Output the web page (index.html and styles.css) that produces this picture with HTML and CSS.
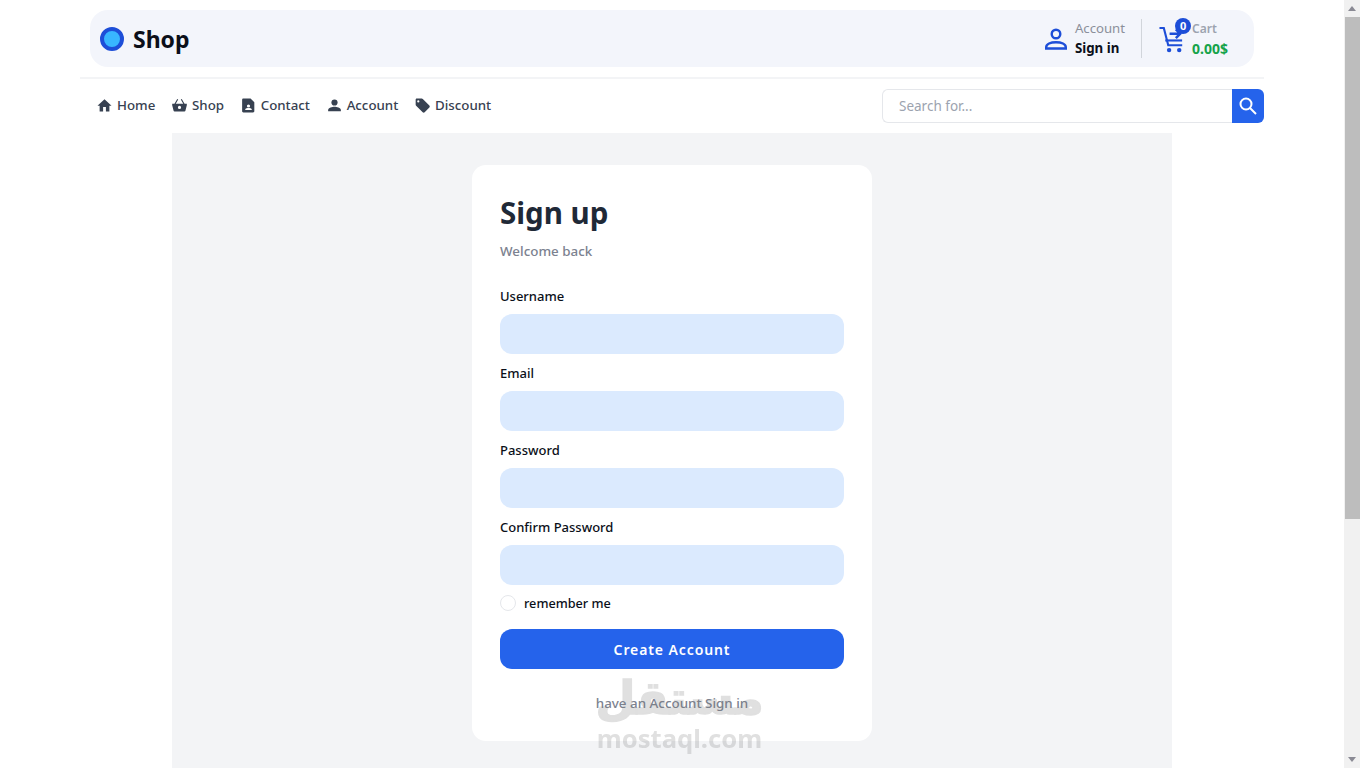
FILE: index.html
```html
<!DOCTYPE html>
<html lang="en">
<head>
  <meta charset="UTF-8">
  <meta name="viewport" content="width=device-width, initial-scale=1.0">
  <title>Sign up</title>
  <link rel="stylesheet" href="styles.css">
</head>
<body>
  <header class="site-header">
    <div class="topbar">
      <a class="logo" href="#">
        <span class="logo-dot"></span>
        <span class="logo-text">Shop</span>
      </a>
      <div class="topbar-right">
        <a class="account" href="#">
          <svg class="account-icon" viewBox="0 0 22 22" fill="none" stroke="#1d4ed8" stroke-width="2.4">
            <circle cx="11" cy="6" r="4.3"/>
            <path d="M1.2 20.5v-1.2c0-3.2 4.400-5 9.800-5s9.800 1.800 9.800 5v1.200z"/>
          </svg>
          <span class="stack">
            <span class="account-label">Account</span>
            <span class="account-action">Sign in</span>
          </span>
        </a>
        <a class="cart" href="#">
          <svg class="cart-icon" viewBox="0 0 27 27" fill="none" stroke="#1d4ed8" stroke-width="2.2">
            <path d="M0.5 1.500h4.500l4.600 18h14.500"/>
            <path d="M6.500 14.500h17.500"/>
            <path d="M11 7.500h11M17.500 3l4.500 4.500-4.500 4.500" stroke-width="2.600"/>
            <circle cx="10.500" cy="24.500" r="2.300" fill="#1d4ed8" stroke="none"/>
            <circle cx="21" cy="24.500" r="2.300" fill="#1d4ed8" stroke="none"/>
          </svg>
          <span class="cart-badge">0</span>
          <span class="stack">
            <span class="cart-label">Cart</span>
            <span class="cart-total">0.00$</span>
          </span>
        </a>
      </div>
    </div>
    <nav class="navbar">
      <ul class="nav-links">
        <li><a href="#">
          <svg viewBox="0 0 16 16"><path d="M6.500 14.500v-5h3v5h3.700V8.200h2.300L8 1.200.5 8.200h2.300v6.300z"/></svg>Home</a></li>
        <li><a href="#">
          <svg viewBox="0 0 16 16"><path d="M5.600 1l-3 5H.2v1.600l1.500 6c.1.5.5.9 1 .9h10.600c.5 0 .9-.4 1-.9l1.500-6V6h-2.400l-3-5-1 .7L12 6H4l2.600-4.300zM8 8.300a1.700 1.700 0 110 3.400 1.700 1.700 0 010-3.400z"/></svg>Shop</a></li>
        <li><a href="#">
          <svg viewBox="0 0 16 16"><path d="M2.500.5h7.700l4 4v9.700c0 .7-.6 1.300-1.300 1.300H2.500c-.7 0-1.300-.6-1.300-1.300V1.800C1.200 1.100 1.800.5 2.500.5zM8 6.800a1.700 1.700 0 100 3.400 1.700 1.700 0 000-3.400zM4.500 12.800h7v-.6c0-1-2.300-1.500-3.500-1.500s-3.500.5-3.500 1.500z"/></svg>Contact</a></li>
        <li><a href="#">
          <svg viewBox="0 0 16 16"><circle cx="8" cy="4.800" r="3.300"/><path d="M1.200 14v-1.300c0-2.300 4.500-3.400 6.800-3.400s6.800 1.100 6.800 3.400V14z"/></svg>Account</a></li>
        <li><a href="#">
          <svg viewBox="0 0 16 16"><path d="M1.800.6h5.400c.4 0 .8.2 1.100.5l7 7c.6.6.6 1.500 0 2.100l-5 5c-.6.6-1.500.6-2.100 0l-7-7c-.3-.3-.5-.7-.5-1.100V2.100C.7 1.300 1 .6 1.800.6zM3.500 2.400a1.200 1.200 0 100 2.400 1.200 1.200 0 000-2.400z"/></svg>Discount</a></li>
      </ul>
      <form class="search">
        <input class="search-input" type="text" placeholder="Search for...">
        <button class="search-button" type="button" aria-label="Search">
          <svg viewBox="0 0 18 18" fill="none" stroke="#fff" stroke-width="2"><circle cx="7" cy="7" r="5.500"/><path d="M11 11l6 6"/></svg>
        </button>
      </form>
    </nav>
  </header>

  <main class="content">
    <form class="card">
      <h1>Sign up</h1>
      <p class="subtitle">Welcome back</p>
      <label class="field-label first">Username</label>
      <input class="field" type="text">
      <label class="field-label">Email</label>
      <input class="field" type="text">
      <label class="field-label">Password</label>
      <input class="field" type="text">
      <label class="field-label">Confirm Password</label>
      <input class="field" type="text">
      <div class="remember">
        <span class="radio"></span>
        <span>remember me</span>
      </div>
      <button class="submit" type="button">Create Account</button>
      <p class="signin-link">have an Account Sign in</p>
    </form>
  </main>

  <div class="watermark">
    <span class="wm-arabic" lang="ar" dir="rtl">مستقل</span>
    <span class="wm-latin">mostaql.com</span>
  </div>

  <div class="scrollbar">
    <span class="scroll-up"></span>
    <span class="scroll-thumb"></span>
    <span class="scroll-down"></span>
  </div>
</body>
</html>
```

FILE: styles.css
```css
* {
  box-sizing: border-box;
}

body {
  margin: 0;
  padding-right: 16px;
  min-height: 1123px;
  background: #fff;
  color: #111827;
  font-family: "Noto Sans", "Open Sans", Arial, sans-serif;
  font-size: 13px;
}

a {
  color: inherit;
  text-decoration: none;
}

/* Header */
.site-header {
  max-width: 1184px;
  margin: 0 auto;
  padding-top: 10px;
}

.topbar {
  display: flex;
  align-items: center;
  justify-content: space-between;
  height: 57px;
  margin: 0 10px;
  padding: 0 26px 0 10px;
  background: #f3f5fb;
  border-radius: 18px;
}

.logo {
  display: flex;
  align-items: center;
  gap: 9px;
}

.logo-dot {
  width: 24px;
  height: 24px;
  background: #38b6ff;
  border: 4px solid #1d4ed8;
  border-radius: 50%;
}

.logo-text {
  color: #0b0f19;
  font-size: 23px;
  font-weight: 700;
  line-height: 30px;
}

.topbar-right {
  display: flex;
  align-items: center;
  height: 39px;
}

.account {
  display: flex;
  align-items: center;
  gap: 8px;
  height: 100%;
  padding-right: 16px;
  border-right: 1px solid #d1d5db;
}

.account-icon {
  width: 22px;
  height: 22px;
}

.stack {
  display: flex;
  flex-direction: column;
  gap: 1px;
}

.account-label {
  color: #8b8f9a;
  font-size: 13.2px;
  line-height: 19px;
}

.account-action {
  color: #0b0f19;
  font-size: 13.3px;
  font-weight: 700;
  line-height: 19px;
}

.cart {
  position: relative;
  display: flex;
  align-items: center;
  gap: 7px;
  padding-left: 17px;
}

.cart-icon {
  width: 26px;
  height: 27px;
  margin-top: 1px;
}

.cart-badge {
  position: absolute;
  top: -1px;
  left: 33px;
  width: 16px;
  height: 16px;
  color: #fff;
  background: #1d4ed8;
  border-radius: 50%;
  font-size: 11px;
  font-weight: 700;
  line-height: 16px;
  text-align: center;
}

.cart-label {
  color: #9ca3af;
  font-size: 12px;
  font-weight: 600;
  line-height: 19px;
}

.cart-total {
  color: #16a34a;
  font-size: 14px;
  font-weight: 700;
  line-height: 19px;
}

.navbar {
  display: flex;
  align-items: center;
  justify-content: space-between;
  height: 56px;
  margin-top: 10px;
  border-top: 2px solid #f3f4f6;
}

.nav-links {
  display: flex;
  gap: 16.7px;
  margin: 0;
  padding: 0 0 2px 17px;
  list-style: none;
}

.nav-links a {
  display: flex;
  align-items: center;
  gap: 5px;
  color: #374151;
  font-size: 13.3px;
  font-weight: 500;
  line-height: 20px;
}

.nav-links svg {
  width: 15px;
  height: 15px;
  fill: #374151;
}

.search {
  display: flex;
  width: 382px;
  height: 34px;
}

.search-input {
  flex: 1;
  min-width: 0;
  padding: 0 16px;
  background: #fff;
  border: 1px solid #e5e7eb;
  border-right: 0;
  border-radius: 6px 0 0 6px;
  font-family: inherit;
  font-size: 13.5px;
  outline: none;
}

.search-input::placeholder {
  color: #9ca3af;
}

.search-button {
  display: flex;
  align-items: center;
  justify-content: center;
  width: 32px;
  padding: 0;
  background: #2563eb;
  border: 0;
  border-radius: 0 6px 6px 0;
}

.search-button svg {
  width: 18px;
  height: 18px;
}

/* Form */
.content {
  width: 1000px;
  min-height: 990px;
  margin: 0 auto;
  padding-top: 32px;
  background: #f3f4f6;
}

.card {
  display: flex;
  flex-direction: column;
  width: 400px;
  height: 576px;
  margin: 0 auto;
  padding: 28px;
  background: #fff;
  border-radius: 14px;
}

.card h1 {
  margin: 0;
  color: #1f2937;
  font-size: 29.5px;
  font-weight: 700;
  line-height: 40px;
}

.subtitle {
  margin: 8px 0 0;
  color: #7c8290;
  font-size: 13.4px;
  font-weight: 500;
  line-height: 20px;
}

.field-label {
  margin: 9px 0 7px;
  color: #0b0f19;
  font-size: 13px;
  font-weight: 500;
  line-height: 21px;
}

.field-label.first {
  margin-top: 25px;
}

.field {
  height: 40px;
  padding: 0 12px;
  background: #dbeafe;
  border: 0;
  border-radius: 12px;
  outline: none;
}

.remember {
  display: flex;
  align-items: center;
  gap: 8px;
  height: 20px;
  margin-top: 8px;
  color: #0b0f19;
  font-size: 12.7px;
  font-weight: 500;
  line-height: 18px;
}

.radio {
  width: 16px;
  height: 16px;
  background: #fff;
  border: 1.5px solid #e5e7eb;
  border-radius: 50%;
}

.submit {
  height: 40px;
  margin-top: 16px;
  color: #fff;
  background: #2563eb;
  border: 0;
  border-radius: 12px;
  font-family: inherit;
  font-size: 14px;
  font-weight: 600;
  letter-spacing: 0.9px;
}

.signin-link {
  margin: 24px 0 0;
  color: #7c8290;
  font-size: 13.4px;
  font-weight: 500;
  line-height: 20px;
  text-align: center;
}

/* Watermark and scrollbar sit over the page */
.watermark {
  position: fixed;
  top: 668px;
  left: 597px;
  display: flex;
  flex-direction: column;
  align-items: center;
  width: 165px;
  color: #787878;
  opacity: 0.23;
  pointer-events: none;
}

.wm-arabic {
  font-family: "DejaVu Sans", sans-serif;
  font-size: 46px;
  font-weight: 700;
  line-height: 60px;
  -webkit-text-stroke: 1.5px #787878;
}

.wm-latin {
  margin-top: -1px;
  font-family: "Noto Sans", sans-serif;
  font-size: 25.6px;
  font-weight: 700;
  line-height: 24px;
}

.scrollbar {
  position: fixed;
  top: 0;
  right: 0;
  bottom: 0;
  display: flex;
  flex-direction: column;
  width: 16px;
  background: #f1f1f1;
}

.scroll-up,
.scroll-down {
  flex: none;
  width: 0;
  height: 0;
  margin: 6px 4px;
  border-right: 4px solid transparent;
  border-left: 4px solid transparent;
}

.scroll-up {
  border-bottom: 5px solid #8a8a94;
}

.scroll-down {
  margin-top: auto;
  border-top: 5px solid #8a8a94;
}

.scroll-thumb {
  flex: none;
  height: 502px;
  margin-left: 1px;
  background: #bdbdbd;
}
```
